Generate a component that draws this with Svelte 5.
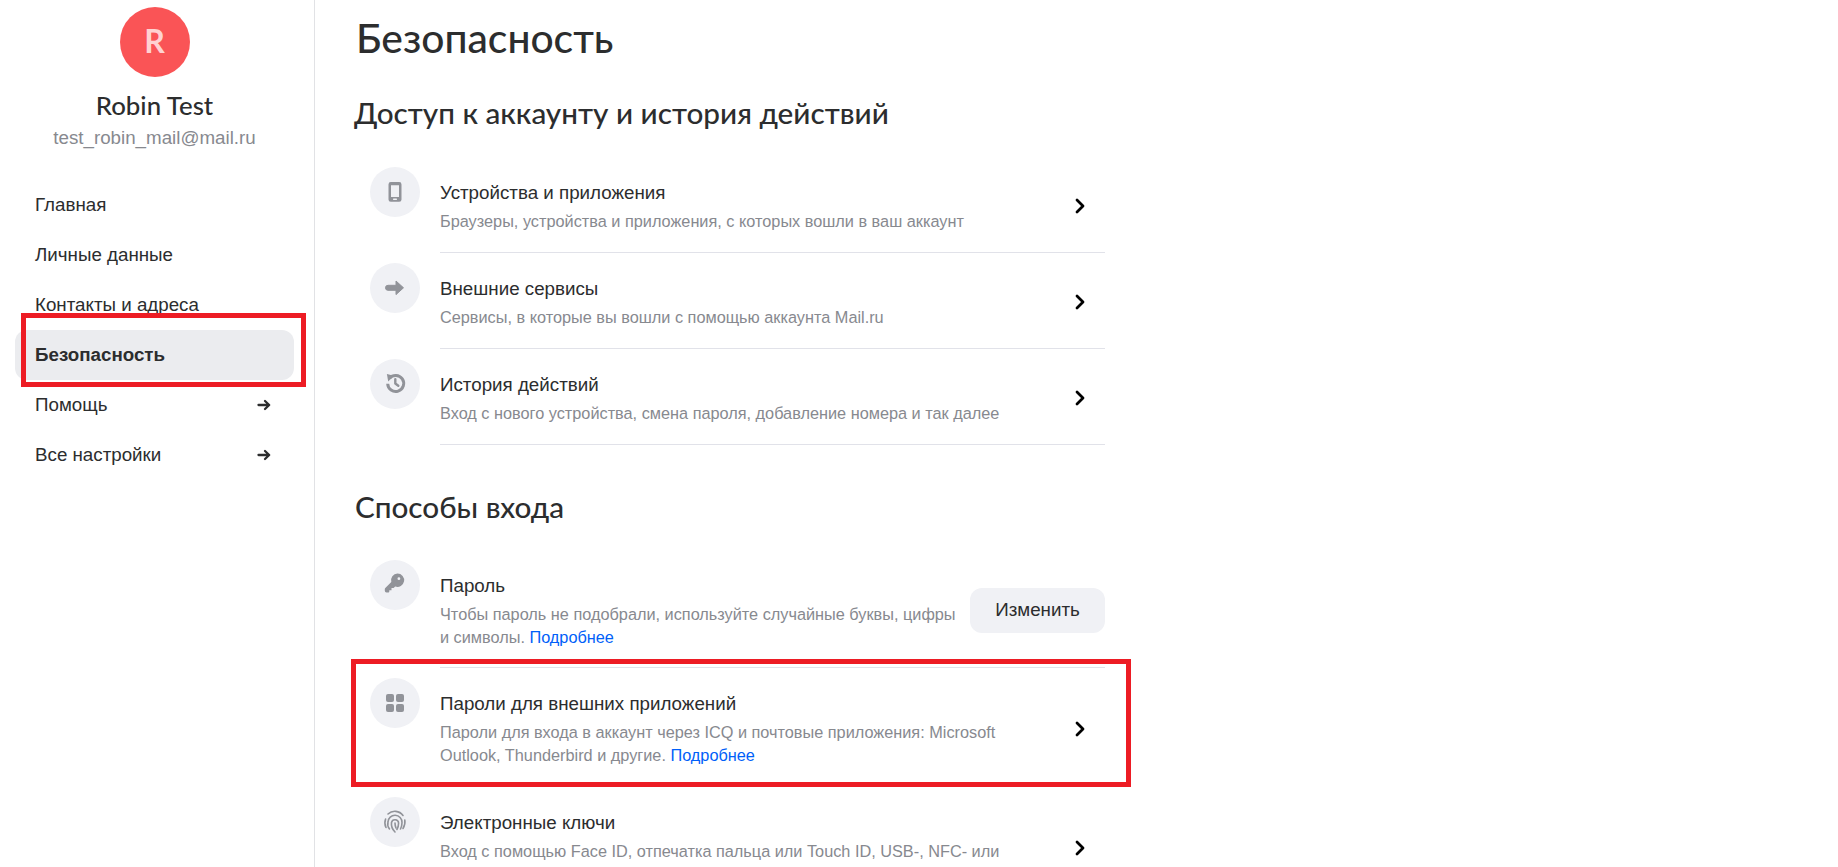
<script>
  const nav = [
    { label: 'Главная' },
    { label: 'Личные данные' },
    { label: 'Контакты и адреса' },
    { label: 'Безопасность', active: true },
    { label: 'Помощь', external: true },
    { label: 'Все настройки', external: true }
  ];

  const access = [
    { icon: 'phone', title: 'Устройства и приложения', desc: 'Браузеры, устройства и приложения, с которых вошли в ваш аккаунт' },
    { icon: 'arrow', title: 'Внешние сервисы', desc: 'Сервисы, в которые вы вошли с помощью аккаунта Mail.ru' },
    { icon: 'history', title: 'История действий', desc: 'Вход с нового устройства, смена пароля, добавление номера и так далее' }
  ];

  const login = [
    { icon: 'key', title: 'Пароль', desc: 'Чтобы пароль не подобрали, используйте случайные буквы, цифры и символы.', more: true, button: 'Изменить' },
    { icon: 'grid', title: 'Пароли для внешних приложений', desc: 'Пароли для входа в аккаунт через ICQ и почтовые приложения: Microsoft Outlook, Thunderbird и другие.', more: true },
    { icon: 'finger', title: 'Электронные ключи', desc: 'Вход с помощью Face ID, отпечатка пальца или Touch ID, USB-, NFC- или', tall: true }
  ];
</script>

{#snippet glyph(name)}
  <svg width="24" height="24" viewBox="0 0 24 24" aria-hidden="true">
    {#if name === 'phone'}
      <path fill="#919399" fill-rule="evenodd" d="M7.800 2.100h8.400a2.300 2.300 0 0 1 2.300 2.300v15a2.300 2.300 0 0 1-2.300 2.300H7.800a2.300 2.300 0 0 1-2.300-2.300v-15a2.300 2.300 0 0 1 2.300-2.300zM8 5.200v11.800h8V5.200zM10.700 18.400a.8.8 0 0 0 0 1.600h2.600a.8.8 0 0 0 0-1.600z" />
    {:else if name === 'arrow'}
      <path fill="#919399" stroke="#919399" stroke-width="1" stroke-linejoin="round" d="M5 9.300H13V5L20.500 11.800 13 18.600V14.300H5a2.500 2.500 0 0 1 0-5z" />
    {:else if name === 'history'}
      <g transform="translate(.5 -1.300)">
        <path fill="none" stroke="#919399" stroke-width="3" d="M6 7.700a8 8 0 1 1-1.800 5.300" />
        <path fill="#919399" d="M3.400 3.400l7 1.700-5.700 5.700z" />
        <path fill="none" stroke="#919399" stroke-width="2.400" stroke-linecap="round" stroke-linejoin="round" d="M11.800 8.500v4.300l3 2.200" />
      </g>
    {:else if name === 'key'}
      <path transform="translate(-.5 -2)" fill="#919399" fill-rule="evenodd" d="M15 2.500a6.700 6.700 0 1 1-2.300 13l-1.600 1.600H9v2.200H6.800v1.200a1 1 0 0 1-1 1H4a1.700 1.700 0 0 1-1.700-1.700v-1.600c0-.5.200-.9.500-1.200l6-6A6.700 6.700 0 0 1 15 2.500zM16.400 6.300a1.400 1.400 0 1 0 0 2.800 1.400 1.400 0 0 0 0-2.800z" />
    {:else if name === 'grid'}
      <rect x="3" y="3" width="8" height="8" rx="2" fill="#919399" />
      <rect x="13" y="3" width="8" height="8" rx="2" fill="#919399" />
      <rect x="3" y="13" width="8" height="8" rx="2" fill="#919399" />
      <rect x="13" y="13" width="8" height="8" rx="2" fill="#919399" />
    {:else if name === 'finger'}
      <g fill="none" stroke="#919399" stroke-width="1.600" stroke-linecap="round">
        <path d="M5 4A10 10 0 0 1 20 5.500" />
        <path d="M2.600 9A10.500 10.500 0 0 0 3 17.500" />
        <path d="M21.800 10c.5 3-.2 6-1.800 8.500" />
        <path d="M6.500 19A8 8 0 0 1 5 12a7 7 0 0 1 14 .5c0 2.500-.5 4.500-1.500 6.500" />
        <path d="M12 22c-2.500-2.500-4-5.500-3.500-9.500a3.600 3.600 0 0 1 7.100.5c0 2.500-.6 4.500-1.700 6.500" />
        <path d="M12 13c0 2 .4 3.500 1 5" />
      </g>
    {/if}
  </svg>
{/snippet}

{#snippet row(item)}
  <div class="row" class:tall={item.tall}>
    <span class="badge">{@render glyph(item.icon)}</span>
    <div class="row-body">
      <div class="row-text">
        <div class="row-title">{item.title}</div>
        <div class="row-desc">{item.desc}{#if item.more}{' '}<a href="#more">Подробнее</a>{/if}</div>
      </div>
      {#if item.button}
        <button type="button">{item.button}</button>
      {:else}
        <svg class="chevron" width="10" height="16" viewBox="0 0 10 16" aria-hidden="true">
          <path fill="none" stroke="#000" stroke-width="2.800" stroke-linecap="round" stroke-linejoin="round" d="M2 2l6 6-6 6" />
        </svg>
      {/if}
    </div>
  </div>
{/snippet}

<div class="page">
  <aside>
    <div class="profile">
      <div class="avatar">R</div>
      <div class="name">Robin Test</div>
      <div class="email">test_robin_mail@mail.ru</div>
    </div>
    <nav>
      {#each nav as item}
        <a href="#nav" class="nav-item" class:active={item.active}>
          <span>{item.label}</span>
          {#if item.external}
            <svg width="14" height="12" viewBox="0 0 14 12" aria-hidden="true">
              <path fill="none" stroke="#2c2d2e" stroke-width="2.300" stroke-linecap="round" stroke-linejoin="round" d="M1.500 6h10.500M8 2l4.200 4L8 10" />
            </svg>
          {/if}
        </a>
      {/each}
    </nav>
    <div class="mark mark-nav"></div>
  </aside>

  <main>
    <h1>Безопасность</h1>
    <h2>Доступ к аккаунту и история действий</h2>
    <section class="list">
      {#each access as item}
        {@render row(item)}
      {/each}
    </section>
    <h2 class="second">Способы входа</h2>
    <section class="list list-login">
      {#each login as item}
        {@render row(item)}
      {/each}
    </section>
    <div class="mark mark-row"></div>
  </main>
</div>

<style>
  :global(body) {
    background: #fff;
    overflow: hidden;
  }

  .page {
    display: flex;
    height: 867px;
    overflow: hidden;
    color: #2c2d2e;
    font-family: "Liberation Sans", Arial, sans-serif;
  }

  aside {
    position: relative;
    width: 314px;
    flex: none;
    border-right: 1px solid #e1e2e5;
  }

  .profile {
    display: flex;
    flex-direction: column;
    align-items: center;
    padding: 7px 5px 0 0;
  }

  .avatar {
    width: 70px;
    height: 70px;
    border-radius: 50%;
    background: #fa5456;
    color: #ffd2d1;
    font: 700 32px/68px Lato, sans-serif;
    text-align: center;
  }

  .name {
    margin-top: 15px;
    font: 500 25.800px/27px Lato, sans-serif;
  }

  .email {
    margin-top: 8px;
    font-size: 18.750px;
    line-height: 22px;
    color: #87898f;
  }

  nav {
    display: flex;
    flex-direction: column;
    margin: 31px 20px 0 15px;
  }

  .nav-item {
    display: flex;
    align-items: center;
    justify-content: space-between;
    height: 50px;
    padding: 0 23px 0 20px;
    border-radius: 12px;
    color: #2c2d2e;
    font-size: 18.750px;
    text-decoration: none;
  }

  .nav-item.active {
    background: #ebecef;
    font-weight: 700;
  }

  main {
    position: relative;
    flex: 1;
    padding-left: 39px;
  }

  h1 {
    margin: 16px 0 0 2px;
    font: 500 40.800px/44px Lato, sans-serif;
  }

  h2 {
    margin: 34px 0 0;
    font: 500 29.700px/38px Lato, sans-serif;
  }

  h2.second {
    margin: 43px 0 0 1px;
  }

  .list {
    margin: 0 0 0 16px;
    width: 735px;
    padding-top: 25px;
  }

  .list-login {
    padding-top: 24px;
  }

  .row {
    display: flex;
    gap: 20px;
    padding-top: 10px;
  }

  .badge {
    display: flex;
    align-items: center;
    justify-content: center;
    flex: none;
    width: 50px;
    height: 50px;
    border-radius: 50%;
    background: #f0f1f5;
  }

  .row-body {
    display: flex;
    flex: 1;
    align-items: center;
    justify-content: space-between;
    padding: 14px 20px 19px 0;
    border-bottom: 1px solid #e1e2e9;
  }

  .row:has(button) .row-body {
    padding: 14px 0 18px 0;
  }

  .row:has(button) .row-desc {
    max-width: 525px;
  }

  /* this row runs past the fold, keep its two-line height */
  .row.tall .row-text {
    min-height: 75px;
  }

  .row-title {
    font-size: 18.750px;
    line-height: 24px;
  }

  .row-desc {
    max-width: 570px;
    margin-top: 5px;
    font-size: 16.300px;
    line-height: 23px;
    color: #87898f;
  }

  .row-desc a {
    color: #005ff9;
    text-decoration: none;
  }

  .chevron {
    margin-bottom: 2px;
  }

  button {
    flex: none;
    width: 135px;
    height: 45px;
    margin-top: -3px;
    border: 0;
    border-radius: 12px;
    background: #f0f1f5;
    color: #2c2d2e;
    font-family: inherit;
    font-size: 18.750px;
  }

  .mark {
    position: absolute;
    border: 5px solid #ed1c24;
    pointer-events: none;
  }

  .mark-nav {
    left: 21px;
    top: 313px;
    width: 275px;
    height: 64px;
  }

  .mark-row {
    left: 36px;
    top: 659px;
    width: 770px;
    height: 118px;
  }
</style>
